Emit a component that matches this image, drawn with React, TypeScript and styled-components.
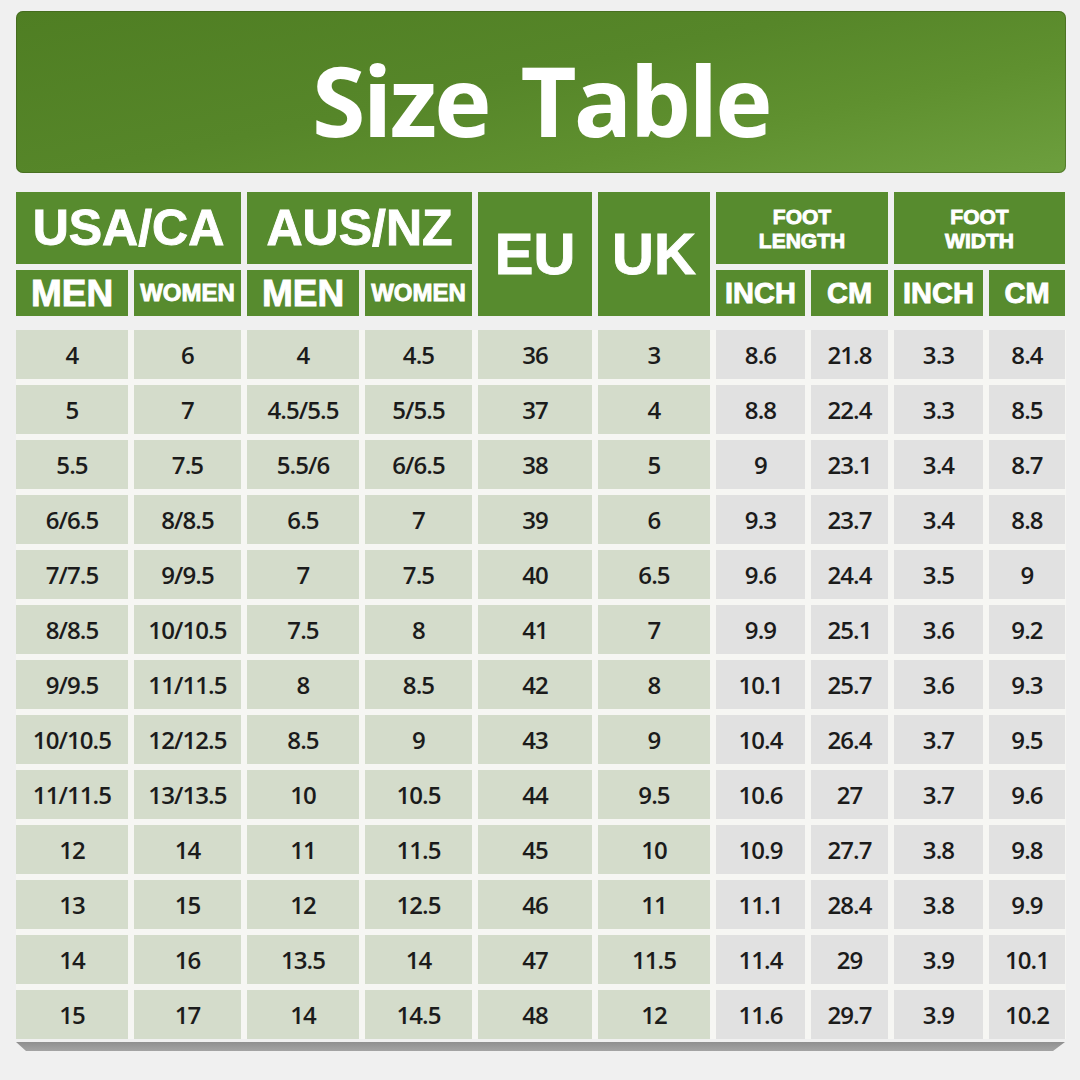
import React from "react";
import styled, { createGlobalStyle } from "styled-components";

const GlobalStyle = createGlobalStyle`
  html, body { margin: 0; padding: 0; background: #f0f0f0; }
  #root { width: 1080px; height: 1080px; }
`;

const Page = styled.div`
  width: 1080px;
  height: 1080px;
  box-sizing: border-box;
  padding: 11px 14px 0 16px;
  display: flex;
  flex-direction: column;
  background: #f0f0f0;
`;

const Banner = styled.div`
  height: 162px;
  border-radius: 7px;
  background: linear-gradient(168deg, #4f7e23 0%, #568629 45%, #5f902f 70%, #6d9f3e 100%);
  box-shadow: inset 0 0 0 1px rgba(60, 90, 25, 0.5);
  display: flex;
  align-items: center;
  justify-content: center;
  padding-top: 14px;
  box-sizing: border-box;
`;

const Title = styled.h1`
  margin: 0;
  font-family: "Open Sans", "Noto Sans", sans-serif;
  font-weight: 700;
  font-size: 97px;
  line-height: 1;
  color: #ffffff;
  word-spacing: 9px;
  letter-spacing: -2.7px;
`;

const columns = "112px 107px 112px 107px 114px 112px 89px 77px 89px 76px";

const HeadGrid = styled.div`
  margin-top: 19px;
  display: grid;
  grid-template-columns: ${columns};
  grid-template-rows: 72px 46px;
  gap: 6px;
`;

const HeadCell = styled.div<{ $col: string; $row: string; $size: number }>`
  grid-column: ${(p) => p.$col};
  grid-row: ${(p) => p.$row};
  background: #578b2e;
  color: #ffffff;
  font-family: "Liberation Sans", Arial, sans-serif;
  font-weight: 700;
  font-size: ${(p) => p.$size}px;
  line-height: 1;
  -webkit-text-stroke: 0.9px #ffffff;
  display: flex;
  align-items: center;
  justify-content: center;
  text-align: center;
  white-space: nowrap;
`;

const Stack = styled.span`
  display: block;
  line-height: 24px;
  padding-top: 2px;
`;

const BodyGrid = styled.div`
  margin-top: 14px;
  display: grid;
  grid-template-columns: ${columns};
  grid-auto-rows: 49px;
  gap: 6px;
  background: #f6f6f3;
`;

const BodyCell = styled.div<{ $tone: "green" | "gray" }>`
  background: ${(p) => (p.$tone === "green" ? "#d4dccb" : "#e1e1e1")};
  color: #1b1b1b;
  font-family: "Open Sans", "Noto Sans", sans-serif;
  font-weight: 600;
  font-size: 24px;
  letter-spacing: -0.9px;
  display: flex;
  align-items: center;
  justify-content: center;
`;

const Ledge = styled.div`
  margin-top: 3px;
  width: 1049px;
  height: 9px;
  background: linear-gradient(180deg, #8f8f8f 0%, #a4a4a4 100%);
  clip-path: polygon(0 0, 100% 0, calc(100% - 12px) 100%, 10px 100%);
`;

const rows: string[][] = [
  ["4", "6", "4", "4.5", "36", "3", "8.6", "21.8", "3.3", "8.4"],
  ["5", "7", "4.5/5.5", "5/5.5", "37", "4", "8.8", "22.4", "3.3", "8.5"],
  ["5.5", "7.5", "5.5/6", "6/6.5", "38", "5", "9", "23.1", "3.4", "8.7"],
  ["6/6.5", "8/8.5", "6.5", "7", "39", "6", "9.3", "23.7", "3.4", "8.8"],
  ["7/7.5", "9/9.5", "7", "7.5", "40", "6.5", "9.6", "24.4", "3.5", "9"],
  ["8/8.5", "10/10.5", "7.5", "8", "41", "7", "9.9", "25.1", "3.6", "9.2"],
  ["9/9.5", "11/11.5", "8", "8.5", "42", "8", "10.1", "25.7", "3.6", "9.3"],
  ["10/10.5", "12/12.5", "8.5", "9", "43", "9", "10.4", "26.4", "3.7", "9.5"],
  ["11/11.5", "13/13.5", "10", "10.5", "44", "9.5", "10.6", "27", "3.7", "9.6"],
  ["12", "14", "11", "11.5", "45", "10", "10.9", "27.7", "3.8", "9.8"],
  ["13", "15", "12", "12.5", "46", "11", "11.1", "28.4", "3.8", "9.9"],
  ["14", "16", "13.5", "14", "47", "11.5", "11.4", "29", "3.9", "10.1"],
  ["15", "17", "14", "14.5", "48", "12", "11.6", "29.7", "3.9", "10.2"],
];

export default function App() {
  return (
    <>
      <GlobalStyle />
      <Page>
        <Banner>
          <Title>Size Table</Title>
        </Banner>
        <HeadGrid>
          <HeadCell $col="1 / 3" $row="1" $size={50}>USA/CA</HeadCell>
          <HeadCell $col="3 / 5" $row="1" $size={50}>AUS/NZ</HeadCell>
          <HeadCell $col="5" $row="1 / 3" $size={58}>EU</HeadCell>
          <HeadCell $col="6" $row="1 / 3" $size={58}>UK</HeadCell>
          <HeadCell $col="7 / 9" $row="1" $size={21}>
            <Stack>FOOT<br />LENGTH</Stack>
          </HeadCell>
          <HeadCell $col="9 / 11" $row="1" $size={21}>
            <Stack>FOOT<br />WIDTH</Stack>
          </HeadCell>
          <HeadCell $col="1" $row="2" $size={37}>MEN</HeadCell>
          <HeadCell $col="2" $row="2" $size={24}>WOMEN</HeadCell>
          <HeadCell $col="3" $row="2" $size={37}>MEN</HeadCell>
          <HeadCell $col="4" $row="2" $size={24}>WOMEN</HeadCell>
          <HeadCell $col="7" $row="2" $size={29}>INCH</HeadCell>
          <HeadCell $col="8" $row="2" $size={29}>CM</HeadCell>
          <HeadCell $col="9" $row="2" $size={29}>INCH</HeadCell>
          <HeadCell $col="10" $row="2" $size={29}>CM</HeadCell>
        </HeadGrid>
        <BodyGrid>
          {rows.map((r, ri) =>
            r.map((v, ci) => (
              <BodyCell key={`${ri}-${ci}`} $tone={ci < 6 ? "green" : "gray"}>
                {v}
              </BodyCell>
            ))
          )}
        </BodyGrid>
        <Ledge />
      </Page>
    </>
  );
}
